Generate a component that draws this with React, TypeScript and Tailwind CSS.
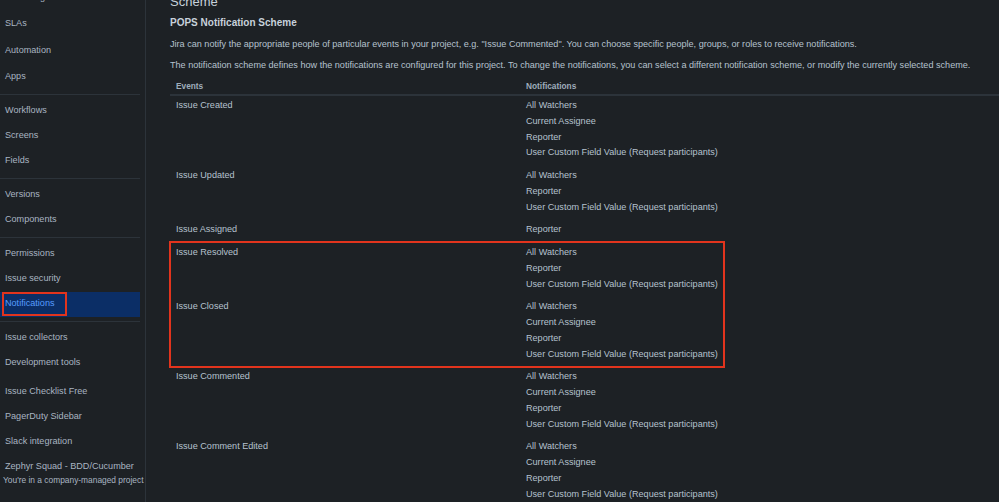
const font = { fontFamily: '"Liberation Sans", Arial, sans-serif' };

type NavItem = { label: string; active?: boolean; tall?: boolean } | "sep" | "sep-first" | "gap";

const nav: NavItem[] = [
  { label: "Knowledge base", tall: true },
  { label: "SLAs", tall: true },
  { label: "Automation", tall: true },
  { label: "Apps", tall: true },
  "sep-first",
  { label: "Workflows" },
  { label: "Screens" },
  { label: "Fields" },
  "sep",
  { label: "Versions" },
  { label: "Components" },
  "sep",
  { label: "Permissions" },
  { label: "Issue security" },
  { label: "Notifications", active: true },
  "sep",
  { label: "Issue collectors" },
  { label: "Development tools" },
  "gap",
  { label: "Issue Checklist Free" },
  { label: "PagerDuty Sidebar" },
  { label: "Slack integration" },
  { label: "Zephyr Squad - BDD/Cucumber" },
];

const rows = [
  { event: "Issue Created", to: ["All Watchers", "Current Assignee", "Reporter", "User Custom Field Value (Request participants)"] },
  { event: "Issue Updated", to: ["All Watchers", "Reporter", "User Custom Field Value (Request participants)"] },
  { event: "Issue Assigned", to: ["Reporter"] },
  { event: "Issue Resolved", to: ["All Watchers", "Reporter", "User Custom Field Value (Request participants)"], marked: true },
  { event: "Issue Closed", to: ["All Watchers", "Current Assignee", "Reporter", "User Custom Field Value (Request participants)"], marked: true },
  { event: "Issue Commented", to: ["All Watchers", "Current Assignee", "Reporter", "User Custom Field Value (Request participants)"] },
  { event: "Issue Comment Edited", to: ["All Watchers", "Current Assignee", "Reporter", "User Custom Field Value (Request participants)"] },
];

function Row({ event, to }: { event: string; to: string[] }) {
  return (
    <div className="flex pt-[2px] pb-[5px] text-[9.1px] leading-[15.75px] text-[#b6c2cf]">
      <div className="w-[350px] shrink-0 px-[6px]">{event}</div>
      <div className="whitespace-nowrap px-[6px]">
        {to.map((t, i) => (
          <div key={i}>{t}</div>
        ))}
      </div>
    </div>
  );
}

export default function App() {
  const before = rows.filter((r, i) => i < 3);
  const marked = rows.filter((r) => r.marked);
  const after = rows.filter((r, i) => i > 4);

  return (
    <div className="flex h-[502px] w-[999px] overflow-hidden bg-[#1d2125]" style={font}>
      {/* Sidebar */}
      <aside className="flex w-[146px] shrink-0 flex-col border-r-[1.5px] border-[#2c333a] pr-[5px]">
        <div className="-mt-[15.75px] flex flex-col">
          {nav.map((item, i) => {
            if (item === "sep-first") return <div key={i} className="my-[3.5px] h-[1.5px] shrink-0 bg-[#2c333a]" />;
            if (item === "sep") return <div key={i} className="my-[3.75px] h-[1.5px] shrink-0 bg-[#2c333a]" />;
            if (item === "gap") return <div key={i} className="h-[4px] shrink-0" />;
            return (
              <div
                key={i}
                className={`relative flex shrink-0 items-center whitespace-nowrap px-[5px] text-[9.1px] ${
                  item.tall ? "h-[26.5px]" : "h-[25px]"
                } ${item.active ? "bg-[#0b2e66] text-[#579dff]" : "text-[#a9b5c2]"}`}
              >
                {item.label}
                {item.active && (
                  <span className="absolute left-[2px] top-0 h-[24px] w-[65px] border-2 border-[#e2341d]" />
                )}
              </div>
            );
          })}
          <div className="-mt-[5px] whitespace-nowrap px-[3px] text-[8.4px] leading-[10px] text-[#a9b5c2]">
            You're in a company-managed project
          </div>
        </div>
      </aside>

      {/* Main */}
      <main className="min-w-0 flex-1 pl-[24px]">
        <h1 className="-mt-[8px] text-[13px] font-medium leading-[20px] text-[#c7d1db]">Scheme</h1>
        <h2 className="mt-[1px] text-[10px] font-bold leading-[20px] text-[#c7d1db]">POPS Notification Scheme</h2>
        <p className="mt-[1px] whitespace-nowrap text-[9.1px] leading-[20px] text-[#b6c2cf]">
          Jira can notify the appropriate people of particular events in your project, e.g. "Issue Commented". You can
          choose specific people, groups, or roles to receive notifications.
        </p>
        <p className="mt-[1px] whitespace-nowrap text-[9.1px] leading-[20px] text-[#b6c2cf]">
          The notification scheme defines how the notifications are configured for this project. To change the
          notifications, you can select a different notification scheme, or modify the currently selected scheme.
        </p>

        <div className="mt-[3px]">
          <div className="flex border-b-2 border-[#2c333a] text-[8.3px] font-semibold leading-[16px] text-[#9fadbc]">
            <div className="w-[350px] shrink-0 px-[6px]">Events</div>
            <div className="px-[6px]">Notifications</div>
          </div>
          {before.map((r) => (
            <Row key={r.event} event={r.event} to={r.to} />
          ))}
          <div className="relative">
            {marked.map((r) => (
              <Row key={r.event} event={r.event} to={r.to} />
            ))}
            <span className="pointer-events-none absolute -left-[1px] -top-[2px] -bottom-[1px] w-[556px] border-2 border-[#e2341d]" />
          </div>
          {after.map((r) => (
            <Row key={r.event} event={r.event} to={r.to} />
          ))}
        </div>
      </main>
    </div>
  );
}
